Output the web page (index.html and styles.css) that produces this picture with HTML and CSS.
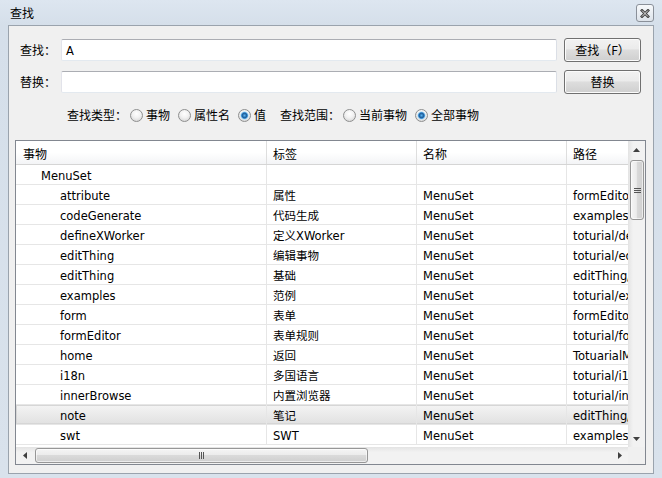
FILE: index.html
```html
<!DOCTYPE html>
<html>
<head>
<meta charset="utf-8">
<link rel="stylesheet" href="styles.css">
</head>
<body>
<div class="window">
  <div class="titlebar">
    <span class="title zh">查找</span>
    <span class="close">
      <svg width="10" height="9" viewBox="0 0 10 9"><path d="M2 1.5 L8 7.5 M8 1.5 L2 7.5" stroke="#434343" stroke-width="2.8" stroke-linecap="square" fill="none"/><path d="M2 1.5 L8 7.5 M8 1.5 L2 7.5" stroke="#f2f2f2" stroke-width="0.9" fill="none"/></svg>
    </span>
  </div>
  <div class="panel">
    <div class="form-row">
      <span class="label zh">查找：</span>
      <div class="textbox">A</div>
      <div class="button zh">查找（F）</div>
    </div>
    <div class="form-row second">
      <span class="label zh">替换：</span>
      <div class="textbox"></div>
      <div class="button zh">替换</div>
    </div>
    <div class="options">
      <span class="zh">查找类型：</span>
      <span class="opt first"><span class="radio"></span><span class="zh">事物</span></span>
      <span class="opt"><span class="radio"></span><span class="zh">属性名</span></span>
      <span class="opt"><span class="radio checked"></span><span class="zh">值</span></span>
      <span class="zh group2">查找范围：</span>
      <span class="opt first"><span class="radio"></span><span class="zh">当前事物</span></span>
      <span class="opt"><span class="radio checked"></span><span class="zh">全部事物</span></span>
    </div>
    <div class="table">
      <div class="table-top">
        <div class="viewport">
          <div class="row header">
            <div class="cell c1 zh">事物</div><div class="cell zh">标签</div><div class="cell zh">名称</div><div class="cell zh">路径</div>
          </div>
          <div class="row"><div class="cell c1 l1">MenuSet</div><div class="cell"></div><div class="cell"></div><div class="cell"></div></div>
          <div class="row"><div class="cell c1 l2">attribute</div><div class="cell">属性</div><div class="cell">MenuSet</div><div class="cell">formEditor/attribute</div></div>
          <div class="row"><div class="cell c1 l2">codeGenerate</div><div class="cell">代码生成</div><div class="cell">MenuSet</div><div class="cell">examples/codeGenerate</div></div>
          <div class="row"><div class="cell c1 l2">defineXWorker</div><div class="cell">定义XWorker</div><div class="cell">MenuSet</div><div class="cell">toturial/defineXWorker</div></div>
          <div class="row"><div class="cell c1 l2">editThing</div><div class="cell">编辑事物</div><div class="cell">MenuSet</div><div class="cell">toturial/editThing</div></div>
          <div class="row"><div class="cell c1 l2">editThing</div><div class="cell">基础</div><div class="cell">MenuSet</div><div class="cell">editThing/basic</div></div>
          <div class="row"><div class="cell c1 l2">examples</div><div class="cell">范例</div><div class="cell">MenuSet</div><div class="cell">toturial/examples</div></div>
          <div class="row"><div class="cell c1 l2">form</div><div class="cell">表单</div><div class="cell">MenuSet</div><div class="cell">formEditor/form</div></div>
          <div class="row"><div class="cell c1 l2">formEditor</div><div class="cell">表单规则</div><div class="cell">MenuSet</div><div class="cell">toturial/formEditor</div></div>
          <div class="row"><div class="cell c1 l2">home</div><div class="cell">返回</div><div class="cell">MenuSet</div><div class="cell">TotuarialMenu/home</div></div>
          <div class="row"><div class="cell c1 l2">i18n</div><div class="cell">多国语言</div><div class="cell">MenuSet</div><div class="cell">toturial/i18n</div></div>
          <div class="row"><div class="cell c1 l2">innerBrowse</div><div class="cell">内置浏览器</div><div class="cell">MenuSet</div><div class="cell">toturial/innerBrowse</div></div>
          <div class="row selected"><div class="cell c1 l2">note</div><div class="cell">笔记</div><div class="cell">MenuSet</div><div class="cell">editThing/note</div></div>
          <div class="row"><div class="cell c1 l2">swt</div><div class="cell">SWT</div><div class="cell">MenuSet</div><div class="cell">examples/swt</div></div>
        </div>
        <div class="vscroll">
          <div class="sbtn"><svg width="7" height="4" viewBox="0 0 7 4"><polygon points="0,4 3.5,0 7,4" fill="#404040"/></svg></div>
          <div class="vtrack"><div class="vthumb"><span class="grip-v"></span></div></div>
          <div class="sbtn"><svg width="7" height="4" viewBox="0 0 7 4"><polygon points="0,0 3.5,4 7,0" fill="#404040"/></svg></div>
        </div>
      </div>
      <div class="table-bottom">
        <div class="hscroll">
          <div class="sbtn"><svg width="4" height="7" viewBox="0 0 4 7"><polygon points="4,0 0,3.5 4,7" fill="#404040"/></svg></div>
          <div class="htrack"><div class="hthumb"><span class="grip-h"></span></div></div>
          <div class="sbtn"><svg width="4" height="7" viewBox="0 0 4 7"><polygon points="0,0 4,3.5 0,7" fill="#404040"/></svg></div>
        </div>
        <div class="corner"></div>
      </div>
    </div>
  </div>
</div>
</body>
</html>
```
FILE: styles.css
```css
* { box-sizing: border-box; }
html, body { margin: 0; padding: 0; }
body {
  width: 662px;
  height: 478px;
  overflow: hidden;
  font-family: "DejaVu Sans", "Noto Sans CJK SC", sans-serif;
  font-size: 11.5px;
  color: #000;
  background: #dbe4ed;
}
.zh {
  font-family: "Noto Sans CJK SC", "DejaVu Sans", sans-serif;
  font-size: 12px;
}
.window {
  width: 662px;
  height: 478px;
  background: linear-gradient(#dde6f0, #d5dfea 25px, #d9e2ec);
  display: flex;
  flex-direction: column;
}
.titlebar {
  height: 25px;
  display: flex;
  align-items: center;
  padding: 0 8px 0 10px;
}
.title { flex: 1; line-height: 16px; }
.close {
  width: 18px;
  height: 18px;
  margin-top: 1px;
  border: 1px solid #8a9099;
  border-radius: 3px;
  background: linear-gradient(#f7f9fb, #dde3ea);
  display: flex;
  align-items: center;
  justify-content: center;
}
.panel {
  margin-left: 8px;
  width: 646px;
  height: 449px;
  border: 1px solid #9aa3ad;
  background: #f0f0f0;
  padding: 12px 7px 0 6px;
}
.form-row {
  height: 24px;
  display: flex;
  align-items: center;
  padding: 0 5px;
}
.form-row.second { margin-top: 8px; }
.label { width: 41px; line-height: 16px; }
.textbox {
  width: 496px;
  height: 22px;
  border: 1px solid;
  border-color: #abadb3 #dbdfe6 #e3e9ef #e2e3ea;
  border-radius: 2px;
  background: #fff;
  padding: 1px 0 0 4px;
  line-height: 20px;
}
.button {
  margin-left: 7px;
  width: 77px;
  height: 24px;
  border: 1px solid #707070;
  border-radius: 3px;
  background: linear-gradient(#f2f2f2, #ebebeb 45%, #dddddd 50%, #cfcfcf);
  box-shadow: inset 0 0 0 1px #fbfbfb;
  display: flex;
  align-items: center;
  justify-content: center;
  line-height: 16px;
}
.options {
  margin-top: 10px;
  height: 22px;
  display: flex;
  align-items: center;
  padding-left: 52px;
  line-height: 16px;
}
.opt {
  display: flex;
  align-items: center;
  gap: 3px;
  margin-left: 8px;
}
.opt.first { margin-left: 3px; }
.group2 { margin-left: 14px; }
.radio {
  width: 13px;
  height: 13px;
  border-radius: 50%;
  border: 1px solid #8e8f8f;
  background: radial-gradient(circle at 50% 35%, #ffffff, #f1f1f1 45%, #cdcdcd);
}
.radio.checked {
  background:
    radial-gradient(circle at 50% 50%, #58b1ee 0, #1f5f9c 2.2px, #3f8fd0 3px, #b8def5 3.8px, rgba(255,255,255,0) 4.4px),
    radial-gradient(circle at 50% 35%, #ffffff, #f1f1f1 45%, #cdcdcd);
}
.table {
  margin-top: 14px;
  width: 631px;
  height: 325px;
  border: 1px solid #828790;
  background: #fff;
}
.table-top { display: flex; height: 306px; }
.viewport {
  width: 612px;
  height: 306px;
  overflow: hidden;
  background: #fff;
}
.row {
  display: flex;
  height: 20px;
  border-bottom: 1px solid #e6e6e6;
  line-height: 19px;
  white-space: nowrap;
}
.cell {
  flex: 0 0 150px;
  width: 150px;
  padding: 2px 0 0 6px;
  border-right: 1px solid #e6e6e6;
  overflow: hidden;
}
.cell.c1 { flex-basis: 251px; width: 251px; padding-left: 7px; }
.cell.l1 { padding-left: 25px; }
.cell.l2 { padding-left: 44px; }
.row.header {
  height: 24px;
  line-height: 23px;
  background: linear-gradient(#ffffff, #ffffff 50%, #f3f4f6);
  border-bottom: 1px solid #d5d5d5;
}
.row.header .cell { border-right-color: #dedede; padding-top: 1px; }
.row.selected {
  background: linear-gradient(#f4f4f4, #e1e1e1);
  box-shadow: inset 0 1px 0 #d6d6d6, inset 0 -1px 0 #d6d6d6, inset 1px 0 0 #d6d6d6;
}
.vscroll {
  width: 17px;
  height: 306px;
  display: flex;
  flex-direction: column;
  background: linear-gradient(to right, #e3e3e3, #f2f2f2 30%, #f2f2f2);
}
.sbtn {
  flex: 0 0 17px;
  width: 17px;
  height: 17px;
  display: flex;
  align-items: center;
  justify-content: center;
}
.vtrack { flex: 1; padding: 2px 1px 0 2px; }
.vthumb {
  height: 60px;
  border: 1px solid #979797;
  border-radius: 3px;
  background: linear-gradient(to right, #f5f5f5, #ececec 45%, #dadada 50%, #cfcfcf);
  box-shadow: inset 0 0 0 1px rgba(255,255,255,0.6);
  display: flex;
  align-items: center;
  justify-content: center;
}
.grip-v {
  width: 7px;
  height: 5px;
  background: linear-gradient(#555 0, #555 1px, transparent 1px, transparent 2px, #555 2px, #555 3px, transparent 3px, transparent 4px, #555 4px, #555 5px);
}
.table-bottom { display: flex; height: 17px; }
.hscroll {
  width: 612px;
  height: 17px;
  display: flex;
  background: linear-gradient(#e3e3e3, #f2f2f2 30%, #f2f2f2);
}
.htrack { flex: 1; padding: 1px 0 1px 2px; }
.hthumb {
  width: 333px;
  height: 15px;
  border: 1px solid #979797;
  border-radius: 3px;
  background: linear-gradient(#f5f5f5, #ececec 45%, #dadada 50%, #cfcfcf);
  box-shadow: inset 0 0 0 1px rgba(255,255,255,0.6);
  display: flex;
  align-items: center;
  justify-content: center;
}
.grip-h {
  width: 5px;
  height: 7px;
  background: linear-gradient(to right, #555 0, #555 1px, transparent 1px, transparent 2px, #555 2px, #555 3px, transparent 3px, transparent 4px, #555 4px, #555 5px);
}
.corner { width: 17px; height: 17px; background: #f0f0f0; }
```
